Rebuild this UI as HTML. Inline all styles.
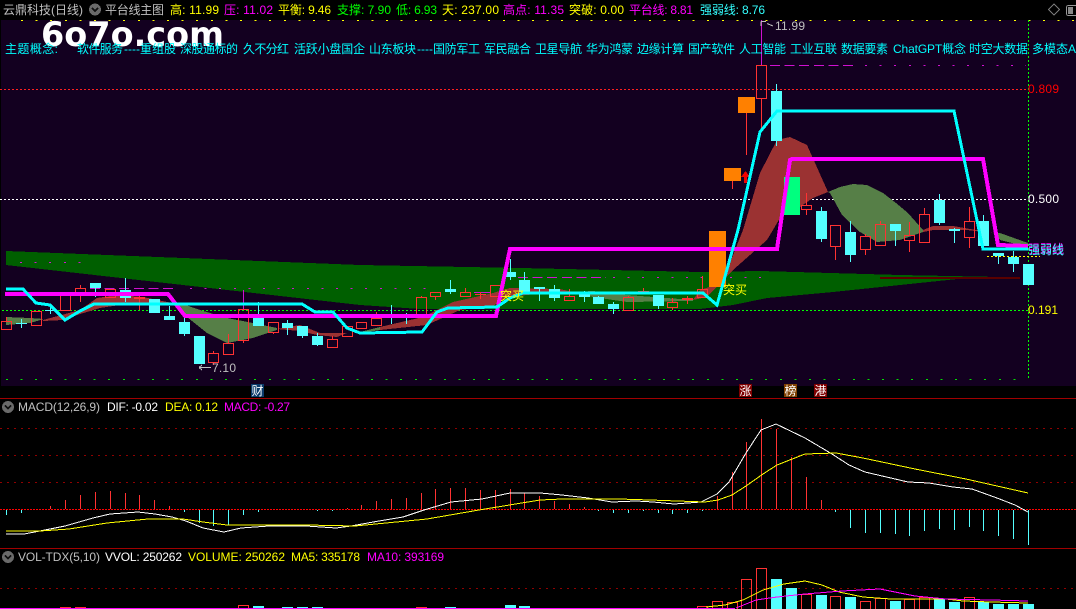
<!DOCTYPE html>
<html><head><meta charset="utf-8"><style>
html,body{margin:0;padding:0;background:#000;width:1076px;height:609px;overflow:hidden}
svg{display:block}
text{font-family:"Liberation Sans","WenQuanYi Zen Hei","Noto Sans CJK SC",sans-serif;font-size:12px}
.g{fill:#c0c0c0}.y{fill:#ffff00}.m{fill:#ff00ff}.l{fill:#00ff00}.c{fill:#33ffff}.w{fill:#fff}.t{fill:#00ffff}
.rb{fill:none;stroke:#ff3232;stroke-width:1}
</style></head><body>
<svg xmlns="http://www.w3.org/2000/svg" width="1076" height="609" viewBox="0 0 1076 609">
<g shape-rendering="crispEdges">
<rect width="1076" height="609" fill="#000"/>
<rect x="1" y="20" width="1075" height="366" fill="#130020"/>
<!-- grid -->
<path d="M21 20.5H1076" stroke="#ffff00" stroke-dasharray="2 12.6" fill="none"/>
<path d="M0 89.5H1028" stroke="#ff2020" stroke-dasharray="2 2" fill="none"/>
<path d="M0 199.5H1028" stroke="#ffffff" stroke-dasharray="2 2" fill="none"/>
<!-- green band -->
<path d="M6 251L360 265L520 268L700 272L760 271L900 275L1000 277L967 278L900 285L833 292L767 298L733 305L700 309L420 309L360 305L6 265Z" fill="#005f00"/>
<path d="M880 277H1020V279H880Z" fill="#5a0000"/>
<path d="M2 310.5H1028" stroke="#00ff00" stroke-dasharray="2 2" fill="none"/>
<path d="M6 379.5H1028" stroke="#00e000" stroke-dasharray="2 12.6" fill="none"/>
<path d="M1028.5 20V380" stroke="#00ff00" stroke-dasharray="2 2" fill="none"/>
<!-- magenta stops -->
<path d="M20 262.5H90" stroke="#d010d0" stroke-dasharray="2 12.6" fill="none"/>
<path d="M90 288.5H175" stroke="#d010d0" stroke-dasharray="10 4.6" fill="none"/>
<path d="M190 288.5H436" stroke="#d010d0" stroke-dasharray="2 12.6" fill="none"/>
<path d="M474 292.5H490" stroke="#d010d0" fill="none"/>
<path d="M518 277.5H606" stroke="#d010d0" stroke-dasharray="10 4.6" fill="none"/>
<path d="M613 277.5H765" stroke="#d010d0" stroke-dasharray="2 12.6" fill="none"/>
<path d="M770 65.5H857" stroke="#d010d0" stroke-dasharray="10 4.6" fill="none"/>
<path d="M865 65.5H1026" stroke="#d010d0" stroke-dasharray="2 12.6" fill="none"/>
<!-- clouds -->
<g fill="#567f47">
<path d="M6 317L30 318L44 319L30 323L6 325Z"/>
<path d="M173 303L180 303L200 310L227 318L253 323L277 328L277 330L253 338L227 343L207 333L187 317Z"/>
<path d="M360 332L380 327L380 330L360 333Z"/>
<path d="M573 292L593 291L627 295L693 300L693 301L627 302L593 297Z"/>
<path d="M828 192L840 187L853 184L867 185L883 193L896 203L908 213L923 230L923 232L900 240L877 242L860 232L842 215L830 193Z"/>
<path d="M993 233L1000 233L1028 243L1028 247L1000 240Z"/>
</g>
<g fill="#9b3232">
<path d="M43 320L80 310L97 298L117 295L143 297L167 302L173 303L133 303L100 308L77 315L63 320L43 321Z"/>
<path d="M277 329L300 325L320 333L347 333L337 337L317 335L300 331Z"/>
<path d="M380 327L423 317L453 302L493 293L510 288L560 289L573 292L547 293L507 297L493 306L460 310L427 325L380 330Z"/>
<path d="M693 300L700 290L722 283L743 230L760 173L777 140L790 137L807 145L828 192L813 198L800 207L783 213L767 240L733 270L707 297Z"/>
<path d="M923 230L933 226L953 226L993 233L967 230L933 230L923 232Z"/>
</g>
<!-- orange / green blocks -->
<rect x="738" y="97" width="17" height="16" fill="#ff8000"/>
<rect x="724" y="168" width="17" height="13" fill="#ff8000"/>
<rect x="709" y="231" width="17" height="56" fill="#ff8000"/>
<rect x="784" y="177" width="16" height="38" fill="#00ff7f"/>
<path d="M746.5 113V155M732.5 181V189" stroke="#ff3232" fill="none"/>
<path d="M745.5 171L750 177H747V183H744V177H741Z" fill="#ee0000"/>
<!-- red hollow candles -->
<g class="rb">
<rect x="1.5" y="321.5" width="10" height="8"/><rect x="31.5" y="311.5" width="10" height="14"/>
<rect x="60.5" y="294.5" width="10" height="16"/><rect x="75.5" y="288.5" width="10" height="4"/>
<rect x="105.5" y="289.5" width="10" height="8"/><rect x="208.5" y="353.5" width="10" height="9"/>
<rect x="223.5" y="343.5" width="10" height="11"/><rect x="238.5" y="309.5" width="10" height="31"/>
<rect x="268.5" y="322.5" width="10" height="10"/><rect x="327.5" y="339.5" width="10" height="8"/>
<rect x="342.5" y="326.5" width="10" height="10"/><rect x="356.5" y="322.5" width="10" height="6"/>
<rect x="371.5" y="318.5" width="10" height="7"/><rect x="416.5" y="297.5" width="10" height="17"/>
<rect x="430.5" y="292.5" width="10" height="4"/><rect x="460.5" y="292.5" width="10" height="4"/>
<rect x="490.5" y="285.5" width="10" height="11"/><rect x="564.5" y="296.5" width="10" height="4"/>
<rect x="623.5" y="297.5" width="10" height="13"/><rect x="667.5" y="302.5" width="10" height="5"/>
<rect x="697.5" y="289.5" width="10" height="8"/><rect x="756.5" y="65.5" width="10" height="33"/>
<rect x="801.5" y="205.5" width="10" height="4"/><rect x="830.5" y="225.5" width="10" height="21"/>
<rect x="860.5" y="236.5" width="10" height="13"/><rect x="875.5" y="224.5" width="10" height="21"/>
<rect x="904.5" y="235.5" width="10" height="5"/><rect x="919.5" y="214.5" width="10" height="28"/>
<rect x="964.5" y="221.5" width="10" height="16"/>
<path d="M6.5 317V321M36.5 311V312M80.5 285V288M80.5 293V302M213.5 351V353M213.5 363V365M228.5 334V343M243.5 341V343M273.5 333V334M332.5 336V339M376.5 312V318M376.5 326V326M421.5 296V297M435.5 297V300M465.5 288V292M569.5 289V296M569.5 301V301M628.5 296V297M672.5 298V302M672.5 308V310M702.5 276V289M702.5 298V298M761.5 99V128M806.5 193V205M806.5 210V215M835.5 247V260M865.5 234V236M865.5 250V255M880.5 221V224M880.5 246V246M909.5 222V235M909.5 241V252M924.5 208V214M969.5 207V221M969.5 238V248"/>
</g>
<path d="M139.5 295V310M480.5 292V299M643.5 288V293M687.5 296V304" stroke="#ff3232" fill="none"/>
<g fill="#ff3232"><rect x="134" y="297" width="11" height="2"/><rect x="475" y="294" width="11" height="1"/><rect x="638" y="291" width="11" height="2"/><rect x="682" y="298" width="11" height="2"/></g>
<path d="M243.5 290V309M761.5 20V65" stroke="#d010d0" fill="none"/>
<!-- cyan candles -->
<g fill="#54ffff">
<rect x="16" y="323" width="11" height="1"/><rect x="45" y="310" width="11" height="1"/><rect x="90" y="283" width="11" height="5"/>
<rect x="120" y="290" width="11" height="8"/><rect x="149" y="299" width="11" height="14"/><rect x="164" y="316" width="11" height="4"/>
<rect x="179" y="322" width="11" height="12"/><rect x="194" y="336" width="11" height="28"/><rect x="253" y="318" width="11" height="8"/>
<rect x="282" y="323" width="11" height="5"/><rect x="297" y="326" width="11" height="10"/><rect x="312" y="336" width="11" height="9"/>
<rect x="445" y="289" width="11" height="3"/><rect x="505" y="272" width="11" height="5"/><rect x="519" y="280" width="11" height="12"/>
<rect x="534" y="287" width="11" height="2"/><rect x="549" y="289" width="11" height="9"/><rect x="579" y="294" width="11" height="3"/>
<rect x="593" y="297" width="11" height="7"/><rect x="608" y="304" width="11" height="5"/><rect x="653" y="295" width="11" height="11"/>
<rect x="771" y="91" width="11" height="50"/><rect x="816" y="211" width="11" height="28"/><rect x="845" y="232" width="11" height="23"/>
<rect x="890" y="224" width="11" height="7"/><rect x="934" y="200" width="11" height="23"/><rect x="949" y="229" width="11" height="2"/>
<rect x="978" y="221" width="11" height="25"/><rect x="993" y="253" width="11" height="3"/><rect x="1008" y="257" width="11" height="7"/><rect x="1023" y="264" width="11" height="21"/>
</g>
<path d="M21.5 319V328M50.5 305V314M95.5 288V297M125.5 278V302M169.5 306V316M184.5 318V336M258.5 302V318M287.5 320V335M302.5 336V338M317.5 333V346M391.5 305V324M406.5 313V324M450.5 280V294M510.5 259V280M524.5 272V280M539.5 289V301M554.5 285V301M584.5 291V302M598.5 296V297M613.5 302V314M658.5 306V309M776.5 84V91M776.5 141V146M821.5 207V242M850.5 221V262M895.5 231V246M939.5 194V225M954.5 228V243M983.5 215V221M998.5 256V264M1013.5 251V272" stroke="#54ffff" fill="none"/>
<!-- main lines -->
<polyline points="5,294 168,294 185,316 360,316 496,316 510,249 777,249 790,160 792,159 983,159 998,245 1028,246" fill="none" stroke="#ff00ff" stroke-width="4"/>
<polyline points="6,289 23,289 36,303 50,305 65,320 80,311 94,304 302,304 315,312 333,312 347,328 360,333 422,332 437,312 448,308 497,307 510,298 523,293 703,293 717,305 738,230 760,132 777,111 954,111 983,249 1028,249" fill="none" stroke="#00ffff" stroke-width="3"/>
<path d="M987 256.5H1040" stroke="#ffff00" stroke-dasharray="2 2" fill="none"/>
<!-- markers -->
<rect x="251" y="384" width="13" height="13" fill="#0a3a6a"/>
<rect x="739" y="384" width="13" height="13" fill="#7f0000"/>
<rect x="784" y="384" width="13" height="13" fill="#7f4000"/>
<rect x="814" y="384" width="13" height="13" fill="#7f0000"/>
<path d="M199 367.5H211M199 367.5L202 365M199 367.5L202 370M761 21.5H766M761 21.5V26M767 23.5L773 26" stroke="#c0c0c0" fill="none"/>
<!-- panel separators -->
<rect x="0" y="398" width="1076" height="1" fill="#a00000"/>
<rect x="0" y="548" width="1076" height="1" fill="#a00000"/>
<path d="M0 428.5H1076M0 455.5H1076M0 482.5H1076M0 588.5H1076" stroke="#900000" stroke-dasharray="2 5" fill="none"/>
<path d="M0 509.5H1076" stroke="#ff0000" stroke-dasharray="2 1" fill="none"/>
<!-- MACD bars -->
<path d="M50.5 506V509M65.5 500V509M80.5 495V509M95.5 492V509M110.5 491V509M125.5 493V509M139.5 495V509M154.5 500V509M169.5 506V509M347.5 508V509M361.5 505V509M376.5 501V509M391.5 499V509M406.5 498V509M421.5 493V509M435.5 489V509M450.5 488V509M465.5 488V509M480.5 490V509M495.5 490V509M510.5 489V509M524.5 493V509M539.5 496V509M554.5 501V509M569.5 504V509M584.5 507V509M717.5 496V509M732.5 472V509M746.5 442V509M761.5 419V509M776.5 429V509M791.5 457V509M806.5 477V509M821.5 500V509" stroke="#ff3232" fill="none"/>
<path d="M6.5 510V515M21.5 510V513M184.5 510V512M199.5 510V523M213.5 510V526M228.5 510V525M243.5 510V515M258.5 510V512M317.5 510V511M332.5 510V511M598.5 510V511M613.5 510V513M628.5 510V513M643.5 510V511M658.5 510V513M672.5 510V514M687.5 510V513M702.5 510V511M835.5 510V512M850.5 510V528M865.5 510V533M880.5 510V533M895.5 510V534M909.5 510V536M924.5 510V531M939.5 510V529M954.5 510V530M969.5 510V527M983.5 510V531M998.5 510V536M1013.5 510V539M1028.5 510V545" stroke="#54ffff" fill="none"/>
<polyline points="6,534 24,534 40,531 65,526 93,518 110,514 138,512 155,514 172,517 186,521 203,528 224,532 241,528 269,526 306,526 336,528 351,526 379,521 403,517 424,510 451,502 482,499 510,493 540,493 562,495 588,498 612,502 636,501 653,502 674,504 701,502 717,494 729,482 746,453 761,430 776,424 805,438 832,454 849,465 865,472 908,482 929,483 953,487 972,489 997,498 1015,505 1028,512" fill="none" stroke="#fff"/>
<polyline points="6,531 40,531 69,529 107,523 148,519 183,519 203,522 227,525 306,525 355,526 386,523 427,519 479,510 540,500 562,499 619,499 650,500 705,502 718,500 732,495 746,486 763,474 777,465 805,454 836,453 863,458 915,469 966,479 1028,493" fill="none" stroke="#ffff00"/>
<!-- VOL bars -->
<g class="rb">
<rect x="697.5" y="606.5" width="10" height="6"/><rect x="712.5" y="601.5" width="10" height="10"/><rect x="727.5" y="602.5" width="10" height="10"/>
<rect x="741.5" y="579.5" width="10" height="33"/><rect x="756.5" y="568.5" width="10" height="44"/><rect x="801.5" y="594.5" width="10" height="18"/>
<rect x="830.5" y="596.5" width="10" height="16"/><rect x="860.5" y="601.5" width="10" height="11"/><rect x="875.5" y="598.5" width="10" height="14"/>
<rect x="904.5" y="599.5" width="10" height="13"/><rect x="919.5" y="597.5" width="10" height="15"/><rect x="964.5" y="597.5" width="10" height="15"/>
</g>
<g fill="#54ffff">
<rect x="771" y="579" width="11" height="30"/><rect x="786" y="588" width="11" height="21"/><rect x="816" y="595" width="11" height="14"/>
<rect x="845" y="597" width="11" height="12"/><rect x="890" y="601" width="11" height="8"/><rect x="934" y="599" width="11" height="10"/>
<rect x="949" y="602" width="11" height="7"/><rect x="978" y="602" width="11" height="7"/><rect x="993" y="604" width="11" height="5"/>
<rect x="1008" y="604" width="11" height="5"/><rect x="1023" y="604" width="11" height="5"/>
<rect x="253" y="606" width="11" height="3"/><rect x="282" y="607" width="11" height="2"/><rect x="297" y="607" width="11" height="2"/><rect x="312" y="607" width="11" height="2"/>
<rect x="445" y="607" width="11" height="2"/><rect x="505" y="605" width="11" height="4"/><rect x="519" y="606" width="11" height="3"/>
</g>
<g fill="#ff3232">
<rect x="60" y="607" width="11" height="2"/><rect x="75" y="607" width="11" height="2"/><rect x="416" y="607" width="11" height="2"/>
</g>
<rect x="238.5" y="605.5" width="10" height="4" fill="none" stroke="#ff3232"/>
<rect x="325" y="608" width="59" height="1" fill="#ffff00"/>
<rect x="0" y="608" width="735" height="1" fill="#ff00ff"/>
<polyline points="706,607 725,605 743,600 763,590 784,584 805,581 822,585 839,592 863,597 891,599 946,599 963,601 991,602 1028,603" fill="none" stroke="#ffff00"/>
<polyline points="736,608 756,600 777,597 805,594 842,591 880,589 915,596 946,599 991,600 1028,601" fill="none" stroke="#ff00ff"/>
<!-- circles -->
<circle cx="95" cy="9.5" r="6" fill="#6a6a6a"/><circle cx="8" cy="407" r="6" fill="#6a6a6a"/><circle cx="8" cy="557" r="6" fill="#6a6a6a"/>
<path d="M92 8L95 11L98 8M5 405.5L8 408.5L11 405.5M5 555.5L8 558.5L11 555.5" fill="none" stroke="#111" stroke-width="1.5"/>
<path d="M1054 4L1059.500 9.500L1054 15L1048.500 9.500Z" fill="none" stroke="#777"/>
<rect x="1066.500" y="5.500" width="12" height="10" rx="2" fill="none" stroke="#999"/>
<rect x="1068" y="7" width="5" height="7" fill="#888"/>
</g>
<!-- header -->
<text x="3" y="14" class="g" textLength="80" lengthAdjust="spacing">云鼎科技(日线)</text>
<text x="105" y="14" class="g" textLength="59" lengthAdjust="spacing">平台线主图</text>
<text x="170" y="14" class="y" textLength="49" lengthAdjust="spacing">高: 11.99</text>
<text x="224" y="14" class="m" textLength="49" lengthAdjust="spacing">压: 11.02</text>
<text x="278" y="14" class="y" textLength="53" lengthAdjust="spacing">平衡: 9.46</text>
<text x="337" y="14" class="l" textLength="54" lengthAdjust="spacing">支撑: 7.90</text>
<text x="396" y="14" class="l" textLength="41" lengthAdjust="spacing">低: 6.93</text>
<text x="442" y="14" class="y" textLength="57" lengthAdjust="spacing">天: 237.00</text>
<text x="503" y="14" class="m" textLength="61" lengthAdjust="spacing">高点: 11.35</text>
<text x="569" y="14" class="y" textLength="55" lengthAdjust="spacing">突破: 0.00</text>
<text x="629" y="14" class="m" textLength="64" lengthAdjust="spacing">平台线: 8.81</text>
<text x="700" y="14" class="c" textLength="65" lengthAdjust="spacing">强弱线: 8.76</text>
<!-- watermark -->
<text x="41" y="46" textLength="183" lengthAdjust="spacingAndGlyphs" style="font-family:'DejaVu Sans',sans-serif;font-size:34px;font-weight:bold;fill:#fff">6o7o.com</text>
<!-- theme -->
<g class="t">
<text x="5" y="53" textLength="53" lengthAdjust="spacing">主题概念:</text>
<text x="77" y="53" textLength="46" lengthAdjust="spacing">软件服务</text>
<text x="124" y="53" textLength="16" lengthAdjust="spacing">----</text>
<text x="140" y="53" textLength="36" lengthAdjust="spacing">重组股</text>
<text x="180" y="53" textLength="58" lengthAdjust="spacing">深股通标的</text>
<text x="243" y="53" textLength="46" lengthAdjust="spacing">久不分红</text>
<text x="294" y="53" textLength="71" lengthAdjust="spacing">活跃小盘国企</text>
<text x="369" y="53" textLength="47" lengthAdjust="spacing">山东板块</text>
<text x="417" y="53" textLength="16" lengthAdjust="spacing">----</text>
<text x="433" y="53" textLength="47" lengthAdjust="spacing">国防军工</text>
<text x="484" y="53" textLength="47" lengthAdjust="spacing">军民融合</text>
<text x="535" y="53" textLength="47" lengthAdjust="spacing">卫星导航</text>
<text x="586" y="53" textLength="47" lengthAdjust="spacing">华为鸿蒙</text>
<text x="637" y="53" textLength="47" lengthAdjust="spacing">边缘计算</text>
<text x="688" y="53" textLength="47" lengthAdjust="spacing">国产软件</text>
<text x="739" y="53" textLength="47" lengthAdjust="spacing">人工智能</text>
<text x="790" y="53" textLength="47" lengthAdjust="spacing">工业互联</text>
<text x="841" y="53" textLength="47" lengthAdjust="spacing">数据要素</text>
<text x="893" y="53" textLength="73" lengthAdjust="spacing">ChatGPT概念</text>
<text x="969" y="53" textLength="59" lengthAdjust="spacing">时空大数据</text>
<text x="1032" y="53" textLength="44" lengthAdjust="spacing">多模态A</text>
</g>
<!-- chart labels -->
<text x="775" y="30" class="g" textLength="30" lengthAdjust="spacing">11.99</text>
<text x="212" y="372" class="g" textLength="24" lengthAdjust="spacing">7.10</text>
<text x="1028" y="93" fill="#ff0000" textLength="31" lengthAdjust="spacing">0.809</text>
<text x="1028" y="203" class="w" textLength="31" lengthAdjust="spacing">0.500</text>
<text x="1028" y="314" class="y" textLength="30" lengthAdjust="spacing">0.191</text>
<text x="1028" y="253" class="m" textLength="36" lengthAdjust="spacing">强弱线</text>
<text x="1028" y="254" class="c" textLength="36" lengthAdjust="spacing">强弱线</text>
<text x="723" y="294" class="y">突买</text>
<text x="500" y="300" class="y">突买</text>
<text x="251.500" y="395" class="w">财</text>
<text x="739.500" y="395" class="w">涨</text>
<text x="784.500" y="395" class="w">榜</text>
<text x="814.500" y="395" class="w">港</text>
<!-- MACD header -->
<text x="18" y="411" class="g" textLength="82" lengthAdjust="spacing">MACD(12,26,9)</text>
<text x="107" y="411" class="w" textLength="51" lengthAdjust="spacing">DIF: -0.02</text>
<text x="165" y="411" class="y" textLength="53" lengthAdjust="spacing">DEA: 0.12</text>
<text x="224" y="411" class="m" textLength="66" lengthAdjust="spacing">MACD: -0.27</text>
<!-- VOL header -->
<text x="18" y="561" class="g" textLength="82" lengthAdjust="spacing">VOL-TDX(5,10)</text>
<text x="105" y="561" class="w" textLength="77" lengthAdjust="spacing">VVOL: 250262</text>
<text x="188" y="561" class="y" textLength="97" lengthAdjust="spacing">VOLUME: 250262</text>
<text x="291" y="561" class="y" textLength="69" lengthAdjust="spacing">MA5: 335178</text>
<text x="367" y="561" class="m" textLength="77" lengthAdjust="spacing">MA10: 393169</text>
</svg>
</body></html>
